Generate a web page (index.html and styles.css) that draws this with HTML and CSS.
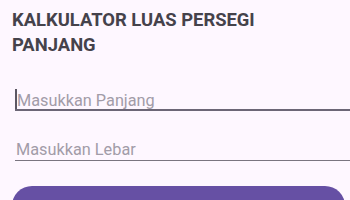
FILE: index.html
```html
<!DOCTYPE html>
<html>
<head>
<meta charset="utf-8">
<link rel="stylesheet" href="styles.css">
</head>
<body>
<div class="screen">
  <h1 class="title">KALKULATOR LUAS PERSEGI PANJANG</h1>
  <div class="field field-focused">
    <span class="caret"></span><span class="placeholder">Masukkan Panjang</span>
  </div>
  <div class="field">
    <span class="placeholder">Masukkan Lebar</span>
  </div>
  <div class="button"></div>
</div>
</body>
</html>
```
FILE: styles.css
```css
html, body {
  margin: 0;
  padding: 0;
  background: #fef7ff;
}
.screen {
  width: 350px;
  height: 200px;
  overflow: hidden;
  padding: 7px 0 0 12px;
  box-sizing: border-box;
  font-family: Roboto, "Noto Sans", sans-serif;
}
.title {
  margin: 0;
  width: 300px;
  font-size: 18.4px;
  line-height: 25px;
  font-weight: 700;
  color: #45424b;
}
.field {
  margin-left: 3px;
  margin-right: -20px;
  height: 20px;
  line-height: 20px;
  font-size: 16.3px;
  border-bottom: 1px solid #7a7580;
  white-space: nowrap;
}
.field-focused {
  margin-top: 32px;
  border-bottom: 2px solid #6c6676;
}
.field + .field {
  margin-top: 29px;
}
.placeholder {
  color: #a29ca8;
  padding-left: 1px;
}
.caret {
  display: inline-block;
  width: 2px;
  height: 20px;
  margin-right: -1px;
  vertical-align: -3px;
  background: #5c5763;
}
.button {
  margin-top: 25px;
  margin-right: 5px;
  height: 40px;
  border-radius: 20px;
  background: #6650a4;
}
```
